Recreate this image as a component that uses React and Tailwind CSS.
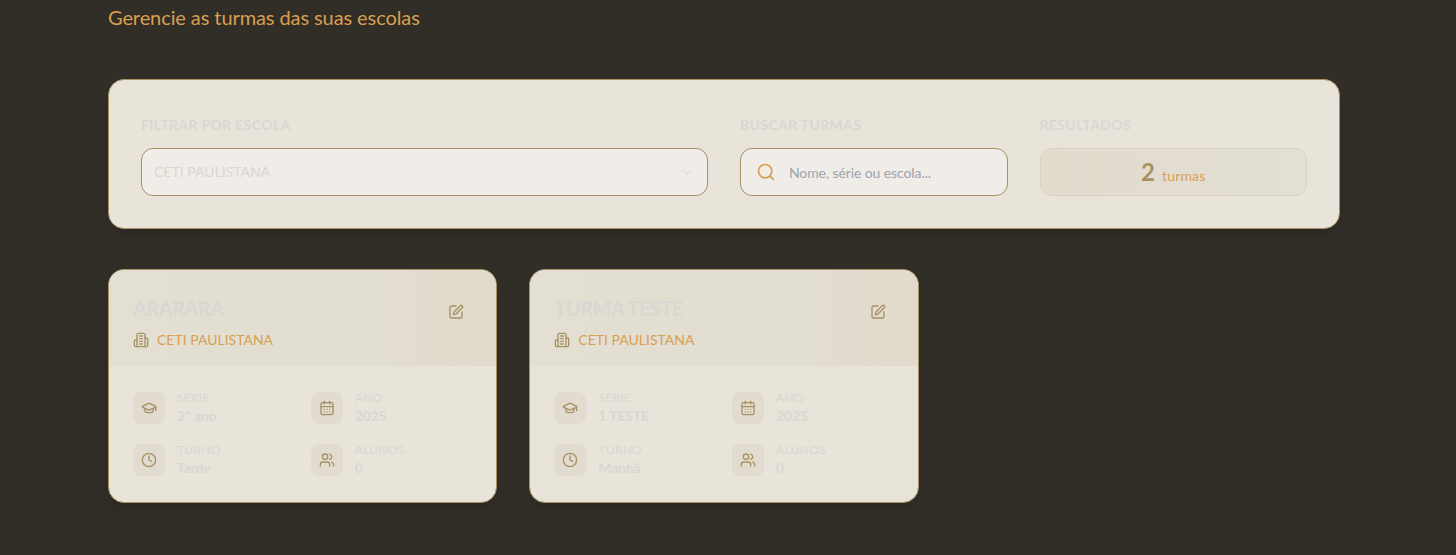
import {
  Search,
  SquarePen,
  GraduationCap,
  CalendarDays,
  Clock,
  Users,
  ChevronDown,
} from "lucide-react";

const classes = [
  { name: "ARARARA", school: "CETI PAULISTANA", grade: "2º ano", year: "2025", shift: "Tarde", students: "0" },
  { name: "TURMA TESTE", school: "CETI PAULISTANA", grade: "1 TESTE", year: "2025", shift: "Manhã", students: "0" },
];

function BuildingIcon({ className }) {
  return (
    <svg
      className={className}
      viewBox="0 0 24 24"
      fill="none"
      stroke="currentColor"
      strokeWidth="2"
      strokeLinecap="round"
      strokeLinejoin="round"
    >
      <path d="M6 22V4a2 2 0 0 1 2-2h8a2 2 0 0 1 2 2v18Z" />
      <path d="M6 12H4a2 2 0 0 0-2 2v6a2 2 0 0 0 2 2h2" />
      <path d="M18 9h2a2 2 0 0 1 2 2v9a2 2 0 0 1-2 2h-2" />
      <path d="M10 6h4" />
      <path d="M10 10h4" />
      <path d="M10 14h4" />
      <path d="M10 18h4" />
    </svg>
  );
}

function Label({ children }) {
  return (
    <div className="mb-3 flex h-6 items-center pt-0.5 text-sm font-bold uppercase tracking-wide text-[#d9d7d2]">
      {children}
    </div>
  );
}

function Detail({ icon: Icon, label, value }) {
  return (
    <div className="flex items-center gap-3">
      <div className="flex size-8 shrink-0 items-center justify-center rounded-lg bg-[#e2dcd0]">
        <Icon className="size-4 text-[#a69263]" />
      </div>
      <div className="text-[#d9d7d2]">
        <p className="text-xs uppercase tracking-wide">{label}</p>
        <p className="text-sm font-bold tracking-[-0.01em]">{value}</p>
      </div>
    </div>
  );
}

function ClassCard({ item }) {
  return (
    <article className="overflow-hidden rounded-2xl border border-[#a69263] bg-[#e8e4d9] shadow-lg">
      <header className="flex items-start justify-between bg-linear-to-r from-[#e3dfd3] via-[#e1ddd0] via-70% to-[#e2dbcd] px-6 pt-6 pb-4">
        <div>
          <h3 className="mb-2 text-xl font-bold tracking-tight text-[#d9d7d2]">{item.name}</h3>
          <div className="flex items-center gap-2 text-sm text-[#d99f50]">
            <BuildingIcon className="size-4 text-[#a69263]" />
            <span>{item.school}</span>
          </div>
        </div>
        <button className="flex h-9 w-8 items-center justify-center text-[#a69263]" aria-label="Editar">
          <SquarePen className="size-4" />
        </button>
      </header>
      <div className="grid grid-cols-2 gap-4 p-6">
        <Detail icon={GraduationCap} label="Série" value={item.grade} />
        <Detail icon={CalendarDays} label="Ano" value={item.year} />
        <Detail icon={Clock} label="Turno" value={item.shift} />
        <Detail icon={Users} label="Alunos" value={item.students} />
      </div>
    </article>
  );
}

export default function App() {
  return (
    <main className="h-[555px] overflow-hidden bg-[#312e27] pr-[116px] pl-[108px] font-['Lato',sans-serif]">
      <p className="pt-[3px] text-xl tracking-[-0.09px] text-[#d99f50]">Gerencie as turmas das suas escolas</p>
      <section className="mt-12 grid grid-cols-4 gap-8 rounded-2xl border border-[#a69263] bg-[#e8e4d9] p-8 shadow-lg">
        <div className="col-span-2">
          <Label>Filtrar por escola</Label>
          <div className="flex h-12 items-center justify-between rounded-xl border border-[#a69263] bg-[#f0ece7] px-3 text-sm text-[#d9d7d2]">
            <span>CETI PAULISTANA</span>
            <ChevronDown className="size-4 opacity-50" />
          </div>
        </div>
        <div>
          <Label>Buscar turmas</Label>
          <div className="flex h-12 items-center gap-[13px] rounded-xl border border-[#a69263] bg-[#f0ece7] px-[15px]">
            <Search className="size-5 text-[#d99f50]" />
            <input
              className="min-w-0 flex-1 pt-0.5 text-sm tracking-[-0.1px] text-[#d9d7d2] outline-none placeholder:text-[#9ca3af]"
              placeholder="Nome, série ou escola..."
            />
          </div>
        </div>
        <div>
          <Label>Resultados</Label>
          <div className="flex h-12 items-center justify-center rounded-xl border border-[#d7d0bd] bg-linear-to-r from-[#e2dbce] to-[#e3dfd3]">
            <div>
              <span className="text-2xl font-bold text-[#a69263]">2</span>
              <span className="ml-[7px] text-sm tracking-[0.15px] text-[#d99f50]">turmas</span>
            </div>
          </div>
        </div>
      </section>
      <section className="mt-10 grid grid-cols-3 gap-8">
        {classes.map((item) => (
          <ClassCard key={item.name} item={item} />
        ))}
      </section>
    </main>
  );
}
